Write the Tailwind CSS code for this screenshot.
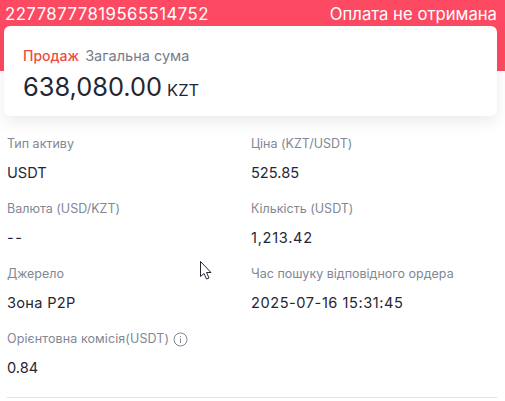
<!DOCTYPE html>
<html lang="uk">
<head>
<meta charset="UTF-8">
<title>Ордер</title>
<script src="https://cdn.jsdelivr.net/npm/@tailwindcss/browser@4"></script>
</head>
<body class="bg-white font-['Inter',sans-serif] overflow-hidden h-[401px] w-[505px] relative">
  <!-- шапка -->
  <div class="h-[71px] bg-[#fd4a62] text-white flex justify-between items-start pl-[5px] pr-[8px] text-[16.7px] leading-[28px]">
    <span class="text-[16.8px] tracking-[0.45px]">22778777819565514752</span>
    <span>Оплата не отримана</span>
  </div>
  <!-- картка суми -->
  <div class="mt-[-45px] ml-[4px] w-[493px] h-[90px] bg-white rounded-[6px] shadow-[0_6px_16px_rgba(0,0,0,0.08)] pl-[19px] pt-[21px] relative">
    <div class="text-[14.5px] leading-[18px] text-[#767c8c]"><span class="text-[#ee4b3e] text-[14px] font-medium mr-[2px]">Продаж</span> Загальна сума</div>
    <div class="flex items-baseline gap-[5px] mt-[6px] text-[#1f2735] leading-[32px]">
      <span class="text-[25.4px]">638,080.00</span>
      <span class="text-[16.5px]">KZT</span>
    </div>
  </div>
  <!-- деталі -->
  <div class="grid grid-cols-[244px_1fr] auto-rows-[65px] pl-[7px] pt-[19px]">
    <div>
      <div class="text-[12.5px] leading-[18px] text-[#818795]">Тип активу</div>
      <div class="text-[14.6px] leading-[18px] mt-[11px] text-[#1f2735]">USDT</div>
    </div>
    <div>
      <div class="text-[12.5px] leading-[18px] text-[#818795]">Ціна (KZT/USDT)</div>
      <div class="text-[14.6px] leading-[18px] mt-[11px] text-[#1f2735]">525.85</div>
    </div>
    <div>
      <div class="text-[12.5px] leading-[18px] text-[#818795]">Валюта (USD/KZT)</div>
      <div class="text-[14.6px] leading-[18px] mt-[11px] text-[#1f2735] tracking-[1.5px]">--</div>
    </div>
    <div>
      <div class="text-[12.5px] leading-[18px] text-[#818795]">Кількість (USDT)</div>
      <div class="text-[14.6px] leading-[18px] mt-[11px] text-[#1f2735] tracking-[0.7px]">1,213.42</div>
    </div>
    <div>
      <div class="text-[12.5px] leading-[18px] text-[#818795]">Джерело</div>
      <div class="text-[14.6px] leading-[18px] mt-[11px] text-[#1f2735] tracking-[0.3px]">Зона P2P</div>
    </div>
    <div>
      <div class="text-[12.5px] leading-[18px] text-[#818795]">Час пошуку відповідного ордера</div>
      <div class="text-[14.6px] leading-[18px] mt-[11px] text-[#1f2735] tracking-[0.55px]">2025-07-16 15:31:45</div>
    </div>
    <div>
      <div class="text-[12.5px] leading-[18px] text-[#818795] flex items-center gap-[4px]">
        <span class="tracking-[0.1px]">Орієнтовна комісія(USDT)</span>
        <svg width="15" height="15" viewBox="0 0 15 15" fill="none" stroke="#818795">
          <circle cx="7.5" cy="7.5" r="6.5"/>
          <path d="M7.5 6.5v4.5M7.5 4v1.2"/>
        </svg>
      </div>
      <div class="text-[14.6px] leading-[18px] mt-[11px] text-[#1f2735]">0.84</div>
    </div>
  </div>
  <div class="ml-[7px] mr-[8px] mt-[2px] border-t border-[#dfe1e6]"></div>
  <!-- курсор миші -->
  <svg class="absolute left-[199px] top-[260px]" width="15" height="22" viewBox="0 0 15 22" fill="#fff" stroke="#1f2735">
    <path d="M1.5 1.5v15l3.5-3 2.5 5.5 2.5-1-2.5-5.5h4.5z"/>
  </svg>
</body>
</html>
